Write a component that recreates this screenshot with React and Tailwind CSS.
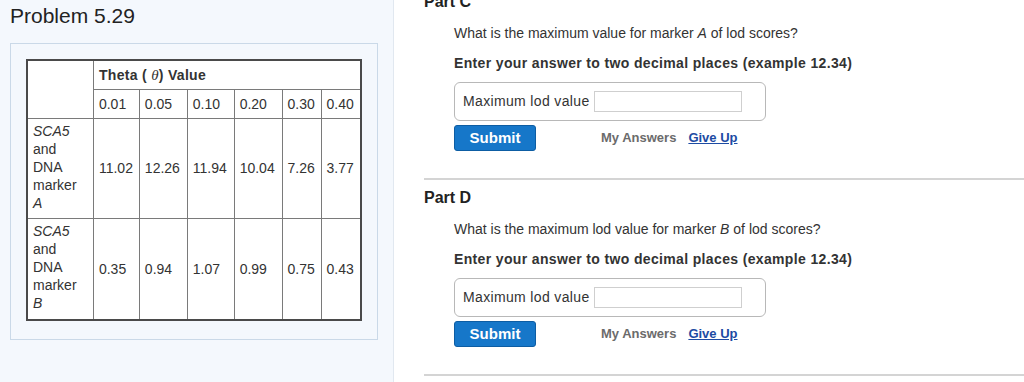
import React from "react";

const thetas = ["0.01", "0.05", "0.10", "0.20", "0.30", "0.40"];
const rows = [
  { marker: "A", values: ["11.02", "12.26", "11.94", "10.04", "7.26", "3.77"], h: "h-[100px]" },
  { marker: "B", values: ["0.35", "0.94", "1.07", "0.99", "0.75", "0.43"], h: "h-[102px]" },
];

function LodTable() {
  return (
    <table className="table-fixed border-collapse border-2 border-[#4a4a4a] bg-white text-[14px] leading-[18px] text-[#333]">
      <colgroup>
        <col className="w-[67px]" />
        <col className="w-[46px]" />
        <col className="w-[48px]" />
        <col className="w-[47px]" />
        <col className="w-[48px]" />
        <col className="w-[39px]" />
        <col className="w-[40px]" />
      </colgroup>
      <tbody>
        <tr className="h-[29px]">
          <td rowSpan={2} className="border border-[#7a7a7a]"></td>
          <td colSpan={6} className="border border-[#7a7a7a] px-[5px] text-left font-bold tracking-[0.3px]">
            Theta ({" "}
            <span className="font-['Liberation_Serif',serif] text-[15px] font-normal italic">θ</span>) Value
          </td>
        </tr>
        <tr className="h-[29px]">
          {thetas.map((t) => (
            <td key={t} className="border border-[#7a7a7a] px-[5px]">
              {t}
            </td>
          ))}
        </tr>
        {rows.map((r) => (
          <tr key={r.marker} className={r.h}>
            <td className="border border-[#7a7a7a] px-[5px] align-top pt-[3px]">
              <i>SCA5</i>
              <br />
              and
              <br />
              DNA
              <br />
              marker
              <br />
              <i>{r.marker}</i>
            </td>
            {r.values.map((v, i) => (
              <td key={i} className="border border-[#7a7a7a] px-[5px] align-middle">
                {v}
              </td>
            ))}
          </tr>
        ))}
      </tbody>
    </table>
  );
}

function PartSection({ label, question }) {
  return (
    <div>
      <div className="h-[2px] bg-[#d4d4d4]" />
      <h3 className="mt-[9px] text-[16px] leading-[17px] font-bold text-[#222]">{label}</h3>
      <div className="pl-[30px]">
        <p className="mt-[15px] text-[14px] leading-4 text-[#333]">{question}</p>
        <p className="mt-[14px] text-[14px] leading-4 font-bold tracking-[0.35px] text-[#333]">
          Enter your answer to two decimal places (example 12.34)
        </p>
        <div className="mt-[11px] flex h-[39px] w-[312px] items-center rounded-[6px] border border-[#b8b8b8] bg-white pl-2">
          <span className="text-[14px] tracking-[0.35px] text-[#333]">Maximum lod value</span>
          <input
            type="text"
            className="ml-[4px] h-[21px] w-[148px] border border-[#cfcfcf] bg-white outline-none"
          />
        </div>
        <div className="mt-[4px] flex items-center">
          <button className="h-[26px] w-[82px] rounded-[3px] border border-[#0d5da3] bg-[#1677c9] text-[15px] font-bold text-white">
            Submit
          </button>
          <span className="ml-[65px] text-[13px] font-bold text-[#6b6b6b]">My Answers</span>
          <a href="#" className="ml-[12px] text-[13px] font-bold text-[#1d4ba3] underline">
            Give Up
          </a>
        </div>
        <div className="h-[27px]" />
      </div>
    </div>
  );
}

export default function App() {
  return (
    <div className="flex h-[382px] w-[1024px] overflow-hidden bg-white font-['Liberation_Sans',Arial,sans-serif]">
      <aside className="w-[394px] shrink-0 border-r border-[#e1e8f0] bg-[#f4f8fd] pl-[10px]">
        <h2 className="pt-[4px] text-[21px] leading-[24px] text-[#222]">Problem 5.29</h2>
        <div className="mt-[15px] w-[368px] border border-[#cad9e8] px-[15px] pt-[15px] pb-[18px]">
          <LodTable />
        </div>
      </aside>
      <main className="flex-1 pl-[30px]">
        <div className="-mt-[18px]">
          <PartSection
            label="Part C"
            question={
              <>
                What is the maximum value for marker <i>A</i> of lod scores?
              </>
            }
          />
          <PartSection
            label="Part D"
            question={
              <>
                What is the maximum lod value for marker <i>B</i> of lod scores?
              </>
            }
          />
          <div className="h-[2px] bg-[#d4d4d4]" />
        </div>
      </main>
    </div>
  );
}
